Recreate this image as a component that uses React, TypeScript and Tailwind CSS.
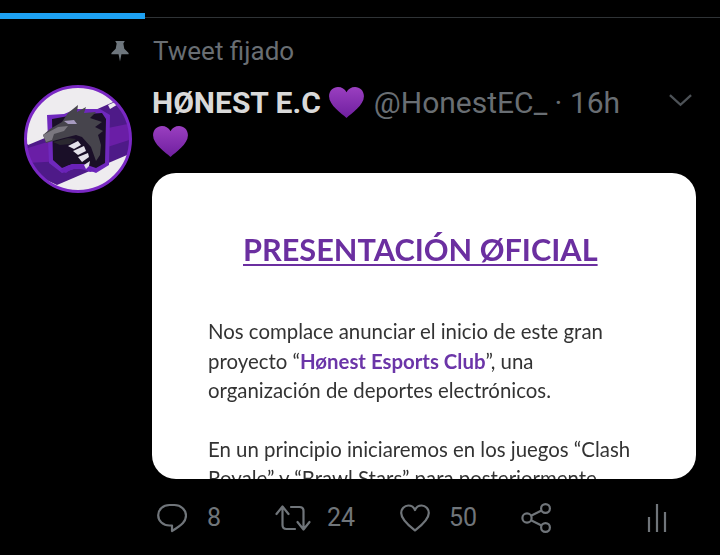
import React from "react";

function Heart({ className, id }: { className: string; id: string }) {
  return (
    <svg viewBox="0 0 36 32" className={className}>
      <defs>
        <linearGradient id={id} x1="0" y1="0" x2="0" y2="1">
          <stop offset="0" stopColor="#9a3fc0" />
          <stop offset="1" stopColor="#6f1f9f" />
        </linearGradient>
      </defs>
      <path d="M18 32C13 27 0 19 0 9.5 0 3.8 4.3 0 9.2 0 13 0 16.4 2 18 5.4 19.6 2 23 0 26.8 0 31.7 0 36 3.8 36 9.5 36 19 23 27 18 32Z" fill={`url(#${id})`} />
    </svg>
  );
}

function Avatar() {
  return (
    <svg viewBox="0 0 108 108" className="w-[108px] h-[108px] shrink-0 blur-[0.6px]">
      <defs>
        <clipPath id="c"><circle cx="54" cy="54" r="52" /></clipPath>
      </defs>
      <circle cx="54" cy="54" r="53" fill="#eeecef" />
      <g clipPath="url(#c)">
        <path d="M0 60 20 50 60 30 96 14 108 20V68L33 100 16 92 0 72Z" fill="#4e1a88" />
        <path d="M0 64 40 52 108 38V54L40 76 0 78Z" fill="#6a1ea6" />
        <path d="M0 54 26 44 28 50 4 60Z" fill="#eeecef" />
        <path d="M84 20 98 14 96 18 86 24Z" fill="#eeecef" />
      </g>
      <path d="M23 30 40 29 52 24 76 24 86 30 85 80 72 88 62 84 50 84 38 88 25 78Z" fill="#6f28bd" />
      <path d="M28 34 50 30 78 28 82 34 81 78 72 83 60 79 48 79 38 83 29 75Z" fill="#1a0f28" />
      <path d="M36 86Q50 72 72 86L66 87Q50 80 42 88Z" fill="#6a22b8" />
      <path d="M19 50 26 44 38 37 44 28 54 20 53 27 62 22 60 28 72 27 66 33 78 37 71 42 79 46 74 50 77 60 76 70 72 76 67 62 58 52 52 50 40 53 29 56 22 58Z" fill="#46444c" />
      <path d="M19 50 34 42 44 41 40 46 30 49 28 55 22 57Z" fill="#7a777f" />
      <path d="M40 36 50 35 53 39 44 39Z" fill="#a79bc0" />
      <path d="M29 57 44 53 52 54 46 59 36 60Z" fill="#2b2830" />
      <path d="M44 61 54 56 57 60 50 64ZM49 66 60 61 62 66 54 70ZM54 72 64 68 65 72 58 77ZM60 80 66 76 65 81 62 84Z" fill="#e4e1ea" />
      <circle cx="54" cy="54" r="52.5" fill="none" stroke="#7a28c4" strokeWidth="3" />
    </svg>
  );
}

export default function App() {
  return (
    <div className="w-[720px] h-[555px] bg-black overflow-hidden flex flex-col font-['Roboto',sans-serif]">
      <div className="h-[19px] flex items-end shrink-0">
        <div className="w-[145px] h-[6px] bg-[#1da1f2]" />
        <div className="flex-1 h-px mb-[1px] bg-[#2f3336]" />
      </div>

      <div className="flex items-center h-[30px] mt-[17px] shrink-0">
        <div className="w-[153px] flex justify-end pr-[24px]">
          <svg viewBox="0 0 18 22" className="w-[18px] h-[21px]" fill="#6e767d">
            <path d="M4 0H14L12.5 2.5 13.5 8 18 12.5V14H10.5L9 21.5 7.5 14H0V12.5L4.5 8 5.5 2.5Z" />
          </svg>
        </div>
        <span className="text-[26px] leading-[30px] text-[#696e73]">Tweet fijado</span>
      </div>

      <div className="flex mt-[19px] pl-[24px] pr-[24px] gap-[20px] h-[440px] shrink-0">
        <Avatar />
        <div className="flex-1 flex flex-col min-w-0">
          <div className="flex items-center h-[36px] shrink-0">
            <span className="text-[30px] leading-[36px] font-bold text-[#d9d9d9] whitespace-nowrap">HØNEST E.C</span>
            <Heart id="h1" className="w-[35px] h-[31px] ml-[8px] mt-[-1px] shrink-0" />
            <span className="text-[30px] leading-[36px] text-[#696e73] ml-[10px] whitespace-nowrap">@HonestEC_ · 16h</span>
            <svg viewBox="0 0 26 14" className="w-[25px] h-[14px] ml-auto mr-[3px] mt-[-6px] shrink-0" fill="none" stroke="#4d5257" strokeWidth="2.4">
              <path d="M2 2 13 12 24 2" />
            </svg>
          </div>
          <Heart id="h2" className="w-[35px] h-[31px] mt-[5px] ml-[1px] shrink-0" />
          <div className="mt-[16px] h-[306px] w-[544px] bg-white rounded-[24px] overflow-hidden shrink-0 pl-[56px] font-['Lato',sans-serif]">
            <div className="blur-[0.6px]">
              <div className="mt-[56px] w-[356px] ml-[35px] text-[30.7px] leading-[41px] font-bold text-[#6b2fa0] underline decoration-[2px] underline-offset-[3px] whitespace-nowrap">PRESENTACIÓN ØFICIAL</div>
              <div className="mt-[47px] text-[20.4px] leading-[29.5px] text-[#333333] whitespace-nowrap">
                <div>Nos complace anunciar el inicio de este gran</div>
                <div>proyecto “<span className="font-bold text-[#6b35a8]">Hønest Esports Club</span>”, una</div>
                <div>organización de deportes electrónicos.</div>
                <div className="mt-[29px]">En un principio iniciaremos en los juegos “Clash</div>
                <div>Royale” y “Brawl Stars” para posteriormente</div>
              </div>
            </div>
          </div>
          <div className="flex items-center h-[30px] mt-[24px] shrink-0 text-[25px] leading-[30px] text-[#70757a]">
            <svg viewBox="0 0 30 30" className="w-[30px] h-[30px] ml-[5px]" fill="none" stroke="#70757a" strokeWidth="2.2">
              <path d="M12.5 2H17.5C24 2 29 7 29 12.5 29 18 25.5 22 15 28V22.5H12.5C6 22.5 1.2 18 1.2 12.3 1.2 6.5 6 2 12.5 2Z" strokeLinejoin="round" />
            </svg>
            <span className="ml-[20px] w-[13px]">8</span>
            <svg viewBox="0 0 36 28" className="w-[36px] h-[28px] ml-[55px]" fill="none" stroke="#70757a" strokeWidth="2.2" strokeLinecap="round" strokeLinejoin="round">
              <path d="M1.5 10 7.5 2.5 13.5 10M7.5 3V21C7.5 23.5 9 25 11.5 25H20M28.5 25V7C28.5 4.5 27 3 24.5 3H16M22.5 18 28.5 25.5 34.5 18" />
            </svg>
            <span className="ml-[16px] w-[29px]">24</span>
            <svg viewBox="0 0 30 28" className="w-[30px] h-[28px] ml-[44px]" fill="none" stroke="#70757a" strokeWidth="2.2" strokeLinejoin="round">
              <path d="M15 26.5C10 22.5 1.2 16 1.2 9 1.2 4.8 4.4 1.5 8.3 1.5 11 1.5 13.8 3 15 6 16.2 3 19 1.5 21.7 1.5 25.6 1.5 28.8 4.8 28.8 9 28.8 16 20 22.5 15 26.5Z" />
            </svg>
            <span className="ml-[19px] w-[28px]">50</span>
            <svg viewBox="0 0 30 30" className="w-[30px] h-[30px] ml-[44px]" fill="none" stroke="#70757a" strokeWidth="2.2">
              <circle cx="6" cy="15" r="4.6" />
              <circle cx="24.5" cy="5.5" r="4.4" />
              <circle cx="24.5" cy="24.5" r="4.4" />
              <path d="M10 12.8 20.5 7.5M10 17.2 20.5 22.5" />
            </svg>
            <svg viewBox="0 0 20 30" className="w-[20px] h-[30px] ml-[96px]" fill="none" stroke="#70757a" strokeWidth="2.2">
              <path d="M2 29V14M10 29V1M18 29V9" />
            </svg>
          </div>
        </div>
      </div>
    </div>
  );
}
